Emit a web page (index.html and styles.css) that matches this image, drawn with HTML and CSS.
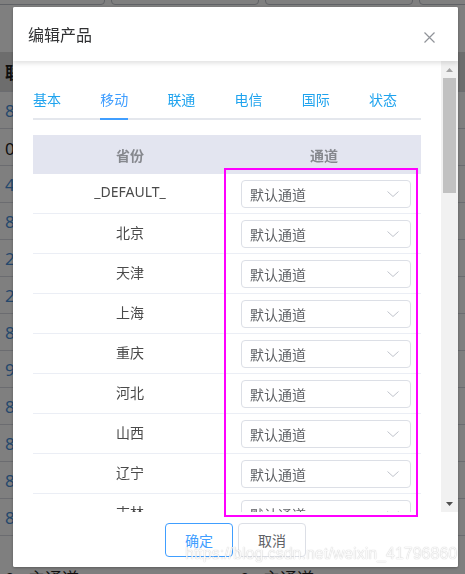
FILE: index.html
```html
<!DOCTYPE html>
<html lang="zh-CN">
<head>
<meta charset="utf-8">
<title>编辑产品</title>
<link rel="stylesheet" href="styles.css">
</head>
<body>
<div class="page">
  <div class="filters">
    <div class="inp inp-a"></div>
    <div class="inp inp-b"></div>
    <div class="inp inp-b"></div>
    <div class="inp inp-c"></div>
  </div>
  <div class="grid">
    <div class="grow ghead"><span class="gc1">联系号码</span><span class="gc2">通道</span></div>
    <div class="grow"><span class="gc1 num">8613800138000</span><span class="gc2 num">8613800138000</span></div>
    <div class="grow"><span class="gc1">0 : 主通道</span><span class="gc2">0 : 主通道</span></div>
    <div class="grow"><span class="gc1 num">4001234567</span><span class="gc2 num">4001234567</span></div>
    <div class="grow"><span class="gc1 num">8613912345678</span><span class="gc2 num">8613912345678</span></div>
    <div class="grow"><span class="gc1 num">2012345678</span><span class="gc2 num">2012345678</span></div>
    <div class="grow"><span class="gc1 num">2198765432</span><span class="gc2 num">2198765432</span></div>
    <div class="grow"><span class="gc1 num">8613511112222</span><span class="gc2 num">8613511112222</span></div>
    <div class="grow"><span class="gc1 num">9512345678</span><span class="gc2 num">9512345678</span></div>
    <div class="grow"><span class="gc1 num">8613633334444</span><span class="gc2 num">8613633334444</span></div>
    <div class="grow"><span class="gc1 num">8613755556666</span><span class="gc2 num">8613755556666</span></div>
    <div class="grow"><span class="gc1 num">8613877778888</span><span class="gc2 num">8613877778888</span></div>
    <div class="grow"><span class="gc1 num">8613999990000</span><span class="gc2 num">8613999990000</span></div>
    <div class="grow glast"><span class="gc1">0 : 主通道</span><span class="gc2">0 : 主通道</span></div>
  </div>
</div>

<div class="overlay"></div>

<div class="dialog">
  <div class="dialog-header">
    <span class="dialog-title">编辑产品</span>
    <svg class="close" width="11" height="11" viewBox="0 0 11 11"><path d="M0.5 0.5 L10.5 10.5 M10.5 0.5 L0.5 10.5" stroke="#909399" stroke-width="1.2" fill="none"/></svg>
  </div>
  <div class="dialog-body">
    <div class="body-content">
      <div class="tabs">
        <span class="tab">基本</span>
        <span class="tab active">移动</span>
        <span class="tab">联通</span>
        <span class="tab">电信</span>
        <span class="tab">国际</span>
        <span class="tab">状态</span>
      </div>
      <div class="table">
        <div class="thead"><span>省份</span><span>通道</span></div>
        <div class="trow"><span class="cell-name">_DEFAULT_</span><div class="select"><span>默认通道</span><svg class="chev" width="12" height="6" viewBox="0 0 12 6"><path d="M0.5 0.5 L6 5.5 L11.5 0.5" stroke="#c0c4cc" stroke-width="1" fill="none"/></svg></div></div>
        <div class="trow"><span class="cell-name">北京</span><div class="select"><span>默认通道</span><svg class="chev" width="12" height="6" viewBox="0 0 12 6"><path d="M0.5 0.5 L6 5.5 L11.5 0.5" stroke="#c0c4cc" stroke-width="1" fill="none"/></svg></div></div>
        <div class="trow"><span class="cell-name">天津</span><div class="select"><span>默认通道</span><svg class="chev" width="12" height="6" viewBox="0 0 12 6"><path d="M0.5 0.5 L6 5.5 L11.5 0.5" stroke="#c0c4cc" stroke-width="1" fill="none"/></svg></div></div>
        <div class="trow"><span class="cell-name">上海</span><div class="select"><span>默认通道</span><svg class="chev" width="12" height="6" viewBox="0 0 12 6"><path d="M0.5 0.5 L6 5.5 L11.5 0.5" stroke="#c0c4cc" stroke-width="1" fill="none"/></svg></div></div>
        <div class="trow"><span class="cell-name">重庆</span><div class="select"><span>默认通道</span><svg class="chev" width="12" height="6" viewBox="0 0 12 6"><path d="M0.5 0.5 L6 5.5 L11.5 0.5" stroke="#c0c4cc" stroke-width="1" fill="none"/></svg></div></div>
        <div class="trow"><span class="cell-name">河北</span><div class="select"><span>默认通道</span><svg class="chev" width="12" height="6" viewBox="0 0 12 6"><path d="M0.5 0.5 L6 5.5 L11.5 0.5" stroke="#c0c4cc" stroke-width="1" fill="none"/></svg></div></div>
        <div class="trow"><span class="cell-name">山西</span><div class="select"><span>默认通道</span><svg class="chev" width="12" height="6" viewBox="0 0 12 6"><path d="M0.5 0.5 L6 5.5 L11.5 0.5" stroke="#c0c4cc" stroke-width="1" fill="none"/></svg></div></div>
        <div class="trow"><span class="cell-name">辽宁</span><div class="select"><span>默认通道</span><svg class="chev" width="12" height="6" viewBox="0 0 12 6"><path d="M0.5 0.5 L6 5.5 L11.5 0.5" stroke="#c0c4cc" stroke-width="1" fill="none"/></svg></div></div>
        <div class="trow"><span class="cell-name">吉林</span><div class="select"><span>默认通道</span><svg class="chev" width="12" height="6" viewBox="0 0 12 6"><path d="M0.5 0.5 L6 5.5 L11.5 0.5" stroke="#c0c4cc" stroke-width="1" fill="none"/></svg></div></div>
        <div class="trow"><span class="cell-name">黑龙江</span><div class="select"><span>默认通道</span><svg class="chev" width="12" height="6" viewBox="0 0 12 6"><path d="M0.5 0.5 L6 5.5 L11.5 0.5" stroke="#c0c4cc" stroke-width="1" fill="none"/></svg></div></div>
      </div>
    </div>
    <div class="scrollbar">
      <div class="sb-btn"><svg width="7" height="4" viewBox="0 0 7 4"><path d="M3.5 0 L7 4 L0 4 Z" fill="#a3a3a3"/></svg></div>
      <div class="sb-thumb"></div>
      <div class="sb-track"></div>
      <div class="sb-btn"><svg width="7" height="4" viewBox="0 0 7 4"><path d="M0 0 L7 0 L3.5 4 Z" fill="#505050"/></svg></div>
    </div>
  </div>
  <div class="dialog-footer">
    <div class="btn btn-primary">确定</div>
    <div class="btn">取消</div>
  </div>
</div>

<div class="annot"></div>
<div class="watermark">https://blog.csdn.net/weixin_41796860</div>
</body>
</html>
```

FILE: styles.css
```css
html, body {
  margin: 0;
  padding: 0;
}
body {
  width: 465px;
  height: 574px;
  overflow: hidden;
  background: #fff;
  font-family: "Noto Sans", "Noto Sans CJK SC", sans-serif;
}

/* background page */
.page {
  width: 465px;
}
.filters {
  height: 52px;
  display: flex;
  gap: 6px;
  overflow: hidden;
}
.inp {
  height: 27px;
  margin-top: -22px;
  box-sizing: border-box;
  border: 1px solid #c0c4cc;
  border-radius: 4px;
  background: #fff;
  flex: none;
}
.inp-a { width: 125px; margin-left: -20px; }
.inp-b { width: 148px; }
.inp-c { width: 100px; }

.grow {
  display: flex;
  height: 37px;
  box-sizing: border-box;
  border-bottom: 1px solid #d6d9e0;
  align-items: center;
  font-size: 17px;
  color: #1f1f1f;
  white-space: nowrap;
  overflow: hidden;
}
.ghead {
  height: 40px;
  background: #dadada;
  font-weight: bold;
  font-family: "Liberation Serif", "Noto Sans CJK SC", serif;
}
.gc1 { width: 235px; padding-left: 5px; box-sizing: border-box; }
.gc2 { width: 230px; padding-left: 5px; box-sizing: border-box; }
.num { color: #4a90d9; }
.glast {
  height: 60px;
  align-items: flex-start;
  padding-top: 29px;
  border-bottom: none;
}

.overlay {
  position: fixed;
  inset: 0;
  background: rgba(0, 0, 0, 0.5);
}

/* dialog */
.dialog {
  position: fixed;
  left: 13px;
  top: 7px;
  width: 445px;
  height: 560px;
  background: #fff;
  border-radius: 2px;
  box-shadow: 0 1px 3px rgba(0, 0, 0, 0.3);
  display: flex;
  flex-direction: column;
  overflow: hidden;
}
.dialog-header {
  flex: 0 0 54px;
  box-sizing: border-box;
  display: flex;
  justify-content: space-between;
  align-items: flex-start;
  padding: 16px 23px 0 15px;
  position: relative;
  z-index: 1;
  background: #fff;
  box-shadow: 0 2px 5px rgba(0, 0, 0, 0.13);
}
.dialog-title {
  font-size: 16px;
  line-height: 24px;
  color: #303133;
}
.close {
  margin-top: 9px;
  display: block;
}

.dialog-body {
  flex: 1;
  min-height: 0;
  display: flex;
}
.body-content {
  flex: 1;
  min-width: 0;
  padding: 19px 20px 0;
  overflow: hidden;
}
.scrollbar {
  flex: 0 0 17px;
  background: #f1f1f1;
  display: flex;
  flex-direction: column;
}
.sb-btn {
  height: 17px;
  flex: none;
  display: flex;
  align-items: center;
  justify-content: center;
}
.sb-btn svg { display: block; }
.sb-thumb {
  height: 115px;
  margin: 0 2px;
  background: #c1c1c1;
  flex: none;
}
.sb-track { flex: 1; }

.tabs {
  display: flex;
  gap: 39.2px;
  height: 40px;
  box-shadow: inset 0 -2px 0 #e4e7ed;
  margin-bottom: 15px;
}
.tab {
  font-size: 14px;
  line-height: 40px;
  color: #1fa3ee;
}
.tab.active {
  color: #409eff;
  box-shadow: inset 0 -2px 0 #409eff;
}

.table {
  width: 388px;
}
.thead {
  display: grid;
  grid-template-columns: 194px 194px;
  height: 39px;
  align-items: center;
  text-align: center;
  background: #e3e5f0;
  font-size: 14px;
  font-weight: bold;
  color: #86888e;
}
.trow {
  display: grid;
  grid-template-columns: 194px 194px;
  height: 40px;
  box-sizing: border-box;
  border-bottom: 1px solid #ebeef5;
  align-items: center;
}
.cell-name {
  text-align: center;
  font-size: 14px;
  color: #4a4a4a;
  padding-bottom: 4px;
}
.select {
  margin-left: 14px;
  width: 170px;
  height: 28px;
  box-sizing: border-box;
  border: 1px solid #dcdfe6;
  border-radius: 4px;
  display: flex;
  align-items: center;
  justify-content: space-between;
  padding: 0 11px 0 8px;
  font-size: 14px;
  color: #606266;
}
.chev { display: block; }

.dialog-footer {
  flex: 0 0 55px;
  box-sizing: border-box;
  display: flex;
  justify-content: center;
  align-items: flex-start;
  padding-top: 11px;
  gap: 5px;
  background: #fff;
}
.btn {
  width: 68px;
  height: 34px;
  box-sizing: border-box;
  border: 1px solid #dcdfe6;
  border-radius: 4px;
  background: #fff;
  font-size: 14px;
  color: #606266;
  display: flex;
  align-items: center;
  justify-content: center;
}
.btn-primary {
  border-color: #409eff;
  color: #409eff;
}

/* overlays on top of the screenshot */
.annot {
  position: fixed;
  left: 224px;
  top: 168px;
  width: 194px;
  height: 349px;
  box-sizing: border-box;
  border: 2px solid #ff00ff;
}
.watermark {
  position: fixed;
  left: 185px;
  top: 545px;
  font-family: "Liberation Sans", Arial, sans-serif;
  font-size: 16px;
  line-height: 18px;
  white-space: nowrap;
  color: rgba(255, 255, 255, 0.92);
  text-shadow: 0 0 1px rgba(0, 0, 0, 0.32);
}
```
